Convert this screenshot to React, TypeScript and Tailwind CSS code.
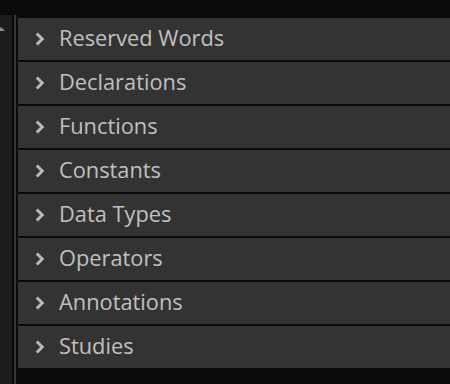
import React from "react";

const items = [
  "Reserved Words",
  "Declarations",
  "Functions",
  "Constants",
  "Data Types",
  "Operators",
  "Annotations",
  "Studies",
];

function Chevron() {
  return (
    <svg width="12" height="14" viewBox="0 0 12 14" className="shrink-0">
      <path d="M2.8 1.5 L8.2 7 L2.8 12.5" fill="none" stroke="#b9b9b9" strokeWidth="3" strokeLinecap="butt" strokeLinejoin="miter" />
    </svg>
  );
}

export default function App() {
  return (
    <div className="w-[450px] h-[384px] bg-[#0b0b0b] flex flex-col overflow-hidden" style={{ fontFamily: '"Open Sans", "Noto Sans", sans-serif' }}>
      <div className="h-[15px] shrink-0" />
      <div className="flex flex-1">
        <div className="w-[12px] bg-[#1c1c1c] relative">
          <div className="absolute left-[-3px] top-[12px] w-0 h-0 border-l-[4px] border-r-[4px] border-b-[4px] border-l-transparent border-r-transparent border-b-[#8a8a8a]" />
        </div>
        <div className="w-[2px] bg-[#0b0b0b]" />
        <div className="w-[2px] bg-[#383838]" />
        <div className="w-[2px] bg-[#0b0b0b]" />
        <div className="flex-1 flex flex-col gap-[2px] pt-[3px]">
          {items.map((t) => (
            <div key={t} className="h-[42px] bg-[#333333] flex items-center pl-[16px]">
              <Chevron />
              <span className="ml-[13px] text-[21.8px] text-[#c0c0c0] leading-none relative top-[-1px]">{t}</span>
            </div>
          ))}
        </div>
      </div>
    </div>
  );
}
